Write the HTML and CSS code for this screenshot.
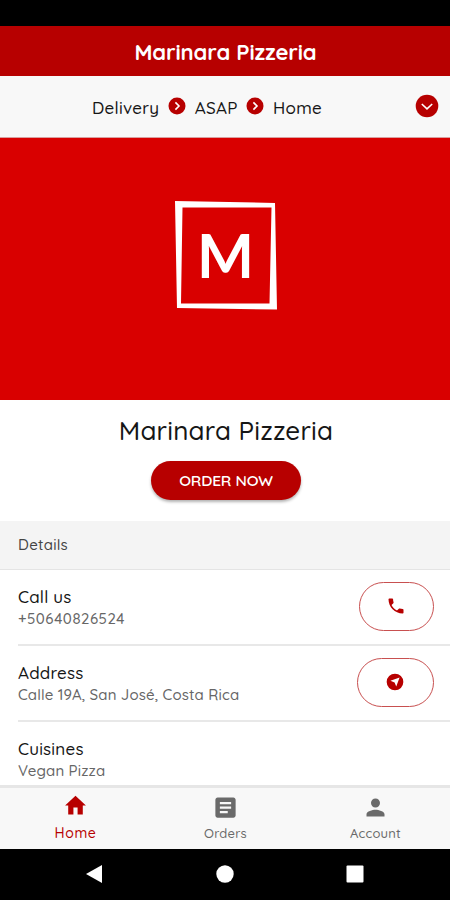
FILE: index.html
```html
<!doctype html>
<html lang="en">

<head>
    <meta charset="UTF-8">
    <meta content="width=device-width, initial-scale=1" name="viewport">
    <title>Marinara Pizzeria</title>
    <link rel="stylesheet" href="styles.css">
</head>

<body>
<div class="statusBar"></div>
<header class="topBar">Marinara Pizzeria</header>
<div class="orderBar">
    <div class="steps">
        <span>Delivery</span>
        <svg class="arrow" viewBox="0 0 18 18"><circle cx="9" cy="9" r="8.500"/><path d="M7.400 5.400L11 9l-3.600 3.600"/></svg>
        <span>ASAP</span>
        <svg class="arrow" viewBox="0 0 18 18"><circle cx="9" cy="9" r="8.500"/><path d="M7.400 5.400L11 9l-3.600 3.600"/></svg>
        <span>Home</span>
    </div>
    <svg class="expand" viewBox="0 0 24 24"><circle cx="12" cy="12" r="11.300"/><path d="M6.800 10l5.200 4.800L17.200 10"/></svg>
</div>
<div class="banner">
    <svg class="logo" viewBox="0 0 102 110">
        <path class="frame" fill-rule="evenodd" d="M0 1L100 3L102 109.500L2 108ZM7.500 7.500L6 103.500L94.500 103.500L96.500 7.500Z"/>
        <text class="letter" x="22" y="78" textLength="57" lengthAdjust="spacingAndGlyphs">M</text>
    </svg>
</div>
<div class="intro">
    <h1>Marinara Pizzeria</h1>
    <button class="orderBtn">ORDER NOW</button>
</div>
<div class="sectionTitle">Details</div>
<main class="list">
    <div class="row">
        <div class="info">
            <p class="label">Call us</p>
            <p class="value phone">+50640826524</p>
        </div>
        <button class="pill">
            <svg viewBox="0 0 24 24"><path d="M6.620 10.790c1.440 2.830 3.760 5.140 6.590 6.590l2.200-2.200c.27-.27.67-.36 1.020-.24 1.120.37 2.330.57 3.570.57.55 0 1 .45 1 1V20c0 .55-.45 1-1 1-9.390 0-17-7.610-17-17 0-.55.45-1 1-1h3.500c.55 0 1 .45 1 1 0 1.250.2 2.450.57 3.570.11.35.03.74-.25 1.020l-2.200 2.200z"/></svg>
        </button>
    </div>
    <div class="row">
        <div class="info">
            <p class="label">Address</p>
            <p class="value">Calle 19A, San José, Costa Rica</p>
        </div>
        <button class="pill wide">
            <svg viewBox="0 0 24 24"><path fill-rule="evenodd" d="M12 2a10 10 0 1 0 0 20a10 10 0 1 0 0-20zM17.500 6.500L13.500 17.500L11.500 12.500L6.500 10.500z"/></svg>
        </button>
    </div>
    <div class="row">
        <div class="info">
            <p class="label">Cuisines</p>
            <p class="value">Vegan Pizza</p>
        </div>
    </div>
</main>
<nav class="tabs">
    <a class="tab active">
        <svg viewBox="0 0 24 24"><path d="M10 21v-6.500h4V21h5v-8.500h3L12 3 2 12.500h3V21z"/></svg>
        <span>Home</span>
    </a>
    <a class="tab">
        <svg viewBox="0 0 24 24"><path d="M19 3H5c-1.100 0-2 .9-2 2v14c0 1.100.9 2 2 2h14c1.100 0 2-.9 2-2V5c0-1.100-.9-2-2-2zm-5 14H7v-2h7v2zm3-4H7v-2h10v2zm0-4H7V7h10v2z"/></svg>
        <span>Orders</span>
    </a>
    <a class="tab">
        <svg viewBox="0 0 24 24"><path d="M12 12c2.210 0 4-1.790 4-4s-1.790-4-4-4-4 1.790-4 4 1.790 4 4 4zm0 2c-2.670 0-8 1.340-8 4v2h16v-2c0-2.660-5.330-4-8-4z"/></svg>
        <span>Account</span>
    </a>
</nav>
<div class="navBar">
    <svg viewBox="0 0 20 20"><path d="M2 10L18 1V19Z"/></svg>
    <svg viewBox="0 0 20 20"><circle cx="10" cy="10" r="8.700"/></svg>
    <svg viewBox="0 0 20 20"><rect x="1.500" y="1.500" width="17" height="17" rx="1"/></svg>
</div>
</body>

</html>
```
FILE: styles.css
```css
* {
    box-sizing: border-box;
}

body {
    margin: 0;
    height: 900px;
    display: flex;
    flex-direction: column;
    overflow: hidden;
    background-color: #fff;
    color: #161616;
    font-family: Quicksand, Lato, sans-serif;
    font-weight: 500;
}

h1,
p {
    margin: 0;
    font-weight: 500;
}

button {
    font-family: inherit;
}

svg {
    display: block;
    flex-shrink: 0;
}

.statusBar {
    height: 26px;
    background-color: #000;
}

.topBar {
    height: 50px;
    background-color: #b70000;
    color: #fff;
    font-size: 22px;
    font-weight: bold;
    letter-spacing: -.1px;
    line-height: 52px;
    padding-left: 1px;
    text-align: center;
}

.orderBar {
    height: 62px;
    display: flex;
    align-items: center;
    justify-content: space-between;
    padding: 0 11px 0 92px;
    background-color: #f8f8f8;
    border-bottom: 1px solid #d9a0a0;
}

.steps {
    display: flex;
    align-items: center;
    gap: 8.700px;
    font-size: 17px;
    letter-spacing: .25px;
    line-height: 22px;
    padding-top: 2px;
}

.arrow {
    width: 18px;
    height: 18px;
    margin-bottom: 4px;
}

.expand {
    width: 24px;
    height: 24px;
    margin-bottom: 1px;
}

.arrow circle,
.expand circle {
    fill: #b70000;
}

.arrow path,
.expand path {
    fill: none;
    stroke: #fff;
    stroke-width: 1.6;
}

.banner {
    height: 262px;
    display: flex;
    justify-content: center;
    padding-top: 62px;
    padding-left: 2px;
    background-color: #d90000;
}

.logo {
    width: 102px;
    height: 110px;
}

.frame {
    fill: #fff;
}

.letter {
    fill: #fff;
    font-family: Lato, sans-serif;
    font-size: 61px;
    font-weight: bold;
}

.intro {
    height: 121px;
    display: flex;
    flex-direction: column;
    align-items: center;
    padding-top: 14px;
    padding-left: 2px;
}

.intro h1 {
    font-size: 26px;
    letter-spacing: .2px;
    line-height: 33px;
}

.orderBtn {
    width: 150px;
    height: 39px;
    margin-top: 14px;
    padding: 0 0 2px;
    border: none;
    border-radius: 20px;
    background-color: #b70000;
    color: #fff;
    font-size: 15.500px;
    font-weight: 600;
    letter-spacing: -.15px;
    box-shadow: 0 2px 3px rgba(0, 0, 0, .3);
}

.sectionTitle {
    height: 49px;
    padding-left: 18px;
    background-color: #f4f4f4;
    border-bottom: 1px solid #e4e4e4;
    color: #444;
    font-size: 15px;
    letter-spacing: .25px;
    line-height: 48px;
}

.list {
    height: 215px;
    padding-left: 18px;
    overflow: hidden;
}

.row {
    height: 76px;
    display: flex;
    align-items: center;
    justify-content: space-between;
    padding-right: 16px;
    border-bottom: 2px solid #e8e8e8;
}

.info {
    padding-top: 2px;
}

.label {
    font-size: 17px;
    letter-spacing: .2px;
    line-height: 22px;
}

.value {
    color: #666;
    font-size: 15px;
    letter-spacing: .15px;
    line-height: 22px;
}

.phone {
    letter-spacing: .5px;
}

.pill {
    width: 75px;
    height: 49px;
    display: flex;
    align-items: center;
    justify-content: center;
    padding: 0 2px 1px 0;
    margin-bottom: 1px;
    border: 1px solid #c85050;
    border-radius: 25px;
    background-color: #fff;
}

.pill.wide {
    width: 77px;
}

.pill svg {
    width: 20px;
    height: 20px;
    fill: #b70000;
}

.tabs {
    height: 64px;
    display: flex;
    background-color: #f8f8f8;
    border-top: 3px solid #e6e6e6;
}

.tab {
    flex: 1;
    display: flex;
    flex-direction: column;
    align-items: center;
    padding-top: 6px;
    padding-left: 1px;
    color: #6a6a6a;
    font-size: 13px;
    letter-spacing: .2px;
    line-height: 17px;
}

.tab svg {
    width: 27px;
    height: 27px;
    margin-bottom: 4px;
    fill: currentColor;
}

.tab.active {
    padding-top: 4px;
    color: #b70000;
    font-size: 14px;
    letter-spacing: .6px;
}

.tab.active svg {
    width: 25px;
    height: 26px;
    margin-bottom: 7px;
}

.navBar {
    flex: 1;
    display: flex;
    justify-content: space-between;
    align-items: center;
    padding: 0 85px 1px 84px;
    background-color: #000;
}

.navBar svg {
    width: 20px;
    height: 20px;
    fill: #fff;
}
```
